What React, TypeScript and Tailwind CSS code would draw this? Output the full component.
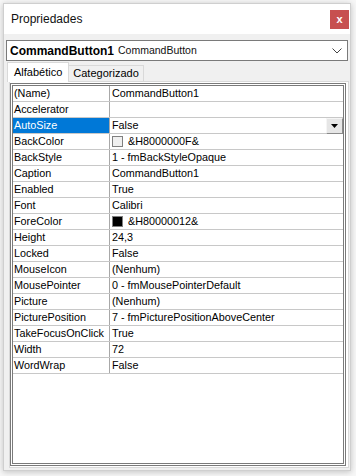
const rows: { name: string; value: string; swatch?: string }[] = [
  { name: '(Name)', value: 'CommandButton1' },
  { name: 'Accelerator', value: '' },
  { name: 'AutoSize', value: 'False' },
  { name: 'BackColor', value: '&H8000000F&', swatch: 'bg-[#f0f0f0]' },
  { name: 'BackStyle', value: '1 - fmBackStyleOpaque' },
  { name: 'Caption', value: 'CommandButton1' },
  { name: 'Enabled', value: 'True' },
  { name: 'Font', value: 'Calibri' },
  { name: 'ForeColor', value: '&H80000012&', swatch: 'bg-black' },
  { name: 'Height', value: '24,3' },
  { name: 'Locked', value: 'False' },
  { name: 'MouseIcon', value: '(Nenhum)' },
  { name: 'MousePointer', value: '0 - fmMousePointerDefault' },
  { name: 'Picture', value: '(Nenhum)' },
  { name: 'PicturePosition', value: '7 - fmPicturePositionAboveCenter' },
  { name: 'TakeFocusOnClick', value: 'True' },
  { name: 'Width', value: '72' },
  { name: 'WordWrap', value: 'False' },
]

export default function App() {
  const selected = 'AutoSize'

  return (
    <div className="w-[356px] h-[476px] bg-[#f7f7f7] pt-[3px] pl-[3px] font-['Liberation_Sans',Arial,sans-serif] text-black">
      {/* Window */}
      <div className="w-[348px] h-[468px] flex flex-col border border-[#cfcfcf] bg-[#f0f0f0] shadow-[0_1px_6px_rgba(0,0,0,0.22)]">
        {/* Title bar */}
        <div className="h-[30px] bg-white flex items-center justify-between pl-[7px] pr-px">
          <span className="text-[12px] text-[#111]">Propriedades</span>
          <button className="w-[19px] h-[19px] bg-[#c75050] flex items-center justify-center text-white text-[11px] font-bold leading-none">
            x
          </button>
        </div>

        {/* Object combo */}
        <div className="mx-[2px] mt-[6px] h-[21px] bg-white border border-[#7a7a7a] flex items-center pl-[3px] pr-[5px]">
          <span className="text-[12px] font-bold">CommandButton1</span>
          <span className="text-[10.5px] ml-[4px] text-[#111]">CommandButton</span>
          <svg className="ml-auto" width="10" height="6" viewBox="0 0 10 6">
            <path d="M0.5 0.5 L5 5 L9.5 0.5" fill="none" stroke="#444" strokeWidth="1" />
          </svg>
        </div>

        {/* Tabs */}
        <div className="ml-[5px] mr-px mt-px flex-1 flex flex-col">
          <div className="flex items-end h-[19px] -ml-[2px] relative z-10">
            <div className="h-[20px] -mb-px px-[6px] bg-white border border-b-0 border-[#d9d9d9] flex items-center text-[11px]">
              Alfabético
            </div>
            <div className="h-[16px] px-[4px] bg-[#f0f0f0] border border-b-0 border-l-0 border-[#d9d9d9] flex items-center text-[11px]">
              Categorizado
            </div>
          </div>

          {/* Tab page */}
          <div className="flex-1 bg-white border border-[#d9d9d9] pt-px pr-[2px] pb-px flex">
            {/* Property grid */}
            <div className="flex-1 border-[3px] border-double border-[#7a7a7a] bg-white">
              {rows.map((r) => {
                const isSel = r.name === selected
                return (
                  <div key={r.name} className="flex h-[16px] border-b border-[#c8c8c8] text-[10.8px] leading-[15px]">
                    <div
                      className={`w-[97px] shrink-0 border-r border-[#a8a8a8] pl-px whitespace-nowrap overflow-hidden ${
                        isSel ? 'bg-[#0078d7] text-white' : ''
                      }`}
                    >
                      {r.name}
                    </div>
                    <div className="flex-1 relative pl-[2px] flex items-center whitespace-nowrap">
                      {r.swatch && (
                        <span className={`w-[11px] h-[11px] border border-[#808080] mr-[5px] ${r.swatch}`} />
                      )}
                      <span>{r.value}</span>
                      {isSel && (
                        <div className="absolute right-0 top-0 w-[17px] h-[16px] bg-[#e6e6e6] border border-t-[#f5f5f5] border-l-[#f5f5f5] border-r-[#8a8a8a] border-b-[#8a8a8a] flex items-center justify-center">
                          <svg width="7" height="4" viewBox="0 0 7 4">
                            <path d="M0 0 H7 L3.5 4 Z" fill="#000" />
                          </svg>
                        </div>
                      )}
                    </div>
                  </div>
                )
              })}
            </div>
          </div>
          <div className="h-[2px]" />
        </div>
      </div>
    </div>
  )
}
